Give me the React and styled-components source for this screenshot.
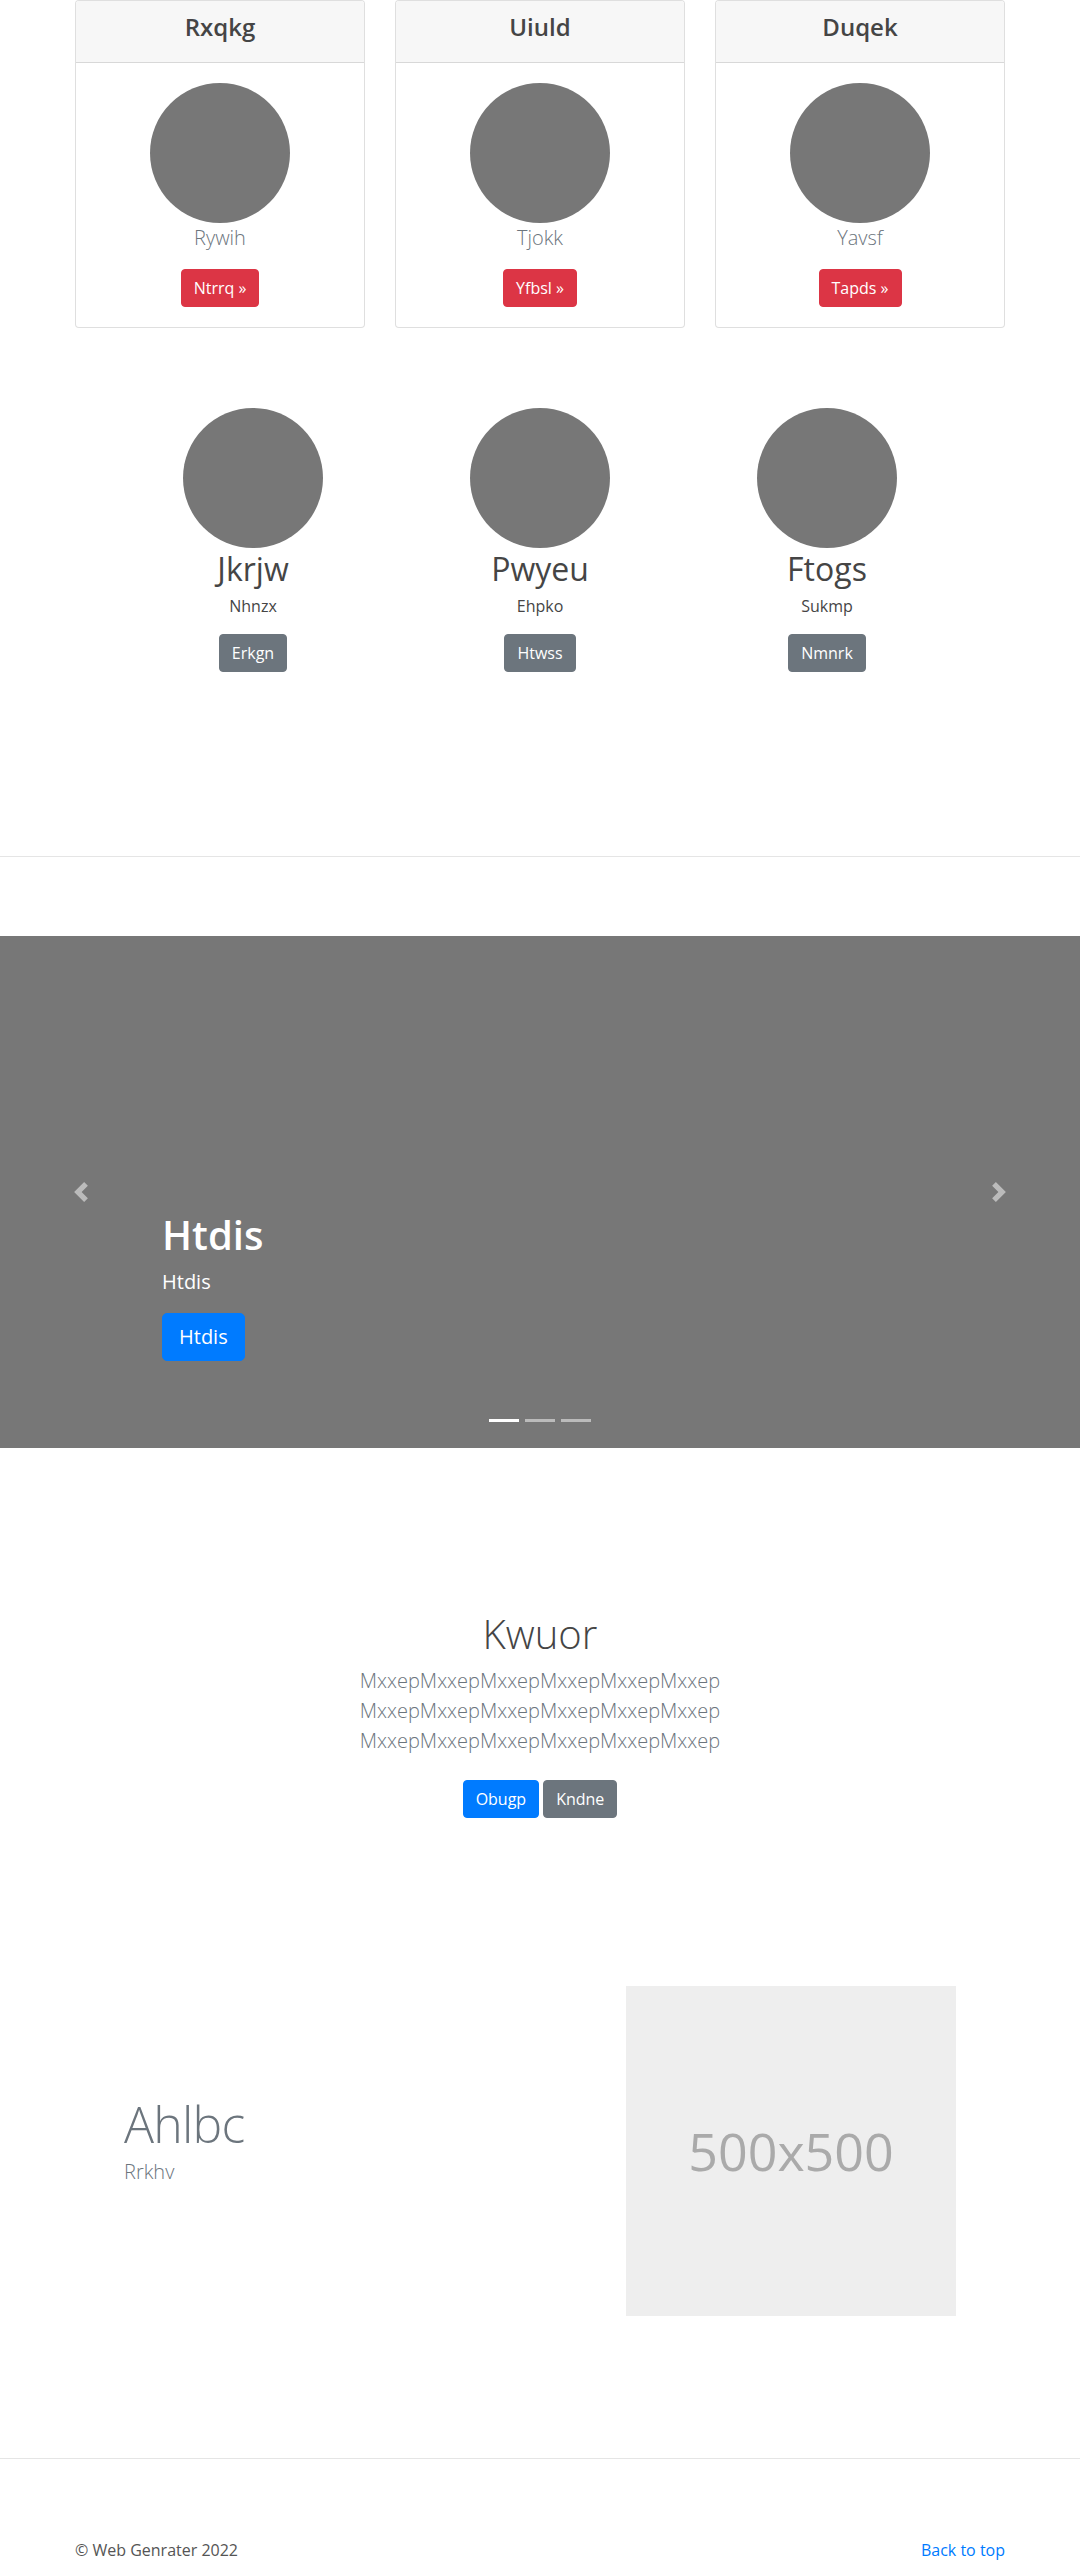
import React from "react";
import styled, { createGlobalStyle } from "styled-components";

const GlobalStyle = createGlobalStyle`
  *, *::before, *::after { box-sizing: border-box; }
  body {
    margin: 0;
    font-family: "Open Sans", "Noto Sans", "Liberation Sans", sans-serif;
    font-size: 16px;
    line-height: 1.5;
    color: #444;
    background: #fff;
  }
  h1, h2, h3, h4, p, ol { margin: 0; }
`;

const COLORS = {
  primary: "#007bff",
  secondary: "#6c757d",
  danger: "#dc3545",
};

const Container = styled.div`
  max-width: 960px;
  margin: 0 auto;
  padding: 0 15px;
`;

const CardGrid = styled.div`
  display: grid;
  grid-template-columns: repeat(3, 1fr);
  gap: 30px;
`;

const Card = styled.div`
  border: 1px solid rgba(0, 0, 0, 0.125);
  border-radius: 4px;
  overflow: hidden;
  text-align: center;
  background: #fff;
`;

const CardHeader = styled.div`
  background: #f7f7f7;
  border-bottom: 1px solid rgba(0, 0, 0, 0.125);
  padding: 12px 20px;
`;

const CardTitle = styled.h4`
  font-size: 24px;
  font-weight: 600;
  line-height: 28.8px;
  margin-bottom: 8px;
  color: #454545;
`;

const CardBody = styled.div`
  padding: 20px;
`;

const Circle = styled.div`
  width: 140px;
  height: 140px;
  border-radius: 50%;
  background: #777;
  margin: 0 auto ${(p) => p.$gap}px;
`;

const MutedLead = styled.p`
  font-size: 20px;
  font-weight: 300;
  line-height: 30px;
  color: #6c757d;
  margin-bottom: 16px;
`;

const Button = styled.a`
  display: inline-block;
  padding: ${(p) => (p.$lg ? "8px 16px" : "6px 12px")};
  font-size: ${(p) => (p.$lg ? 20 : 16)}px;
  line-height: ${(p) => (p.$lg ? 30 : 24)}px;
  font-weight: 400;
  border: 1px solid ${(p) => COLORS[p.$variant]};
  border-radius: ${(p) => (p.$lg ? 5 : 4)}px;
  background: ${(p) => COLORS[p.$variant]};
  color: #fff;
  text-decoration: none;
  cursor: pointer;
`;

const FeatureGrid = styled.div`
  display: grid;
  grid-template-columns: repeat(3, 287px);
  justify-content: center;
  margin-top: 80px;
  text-align: center;
`;

const FeatureCol = styled.div`
  display: flex;
  flex-direction: column;
  align-items: center;
`;

const FeatureTitle = styled.h2`
  font-size: 32px;
  font-weight: 400;
  line-height: 38.4px;
  margin: 2px 0 6px;
  color: #454545;
`;

const FeatureText = styled.p`
  font-size: 16px;
  line-height: 24px;
  margin-bottom: 16px;
  color: #454545;
`;

const Divider = styled.hr`
  border: 0;
  border-top: 1px solid rgba(0, 0, 0, 0.1);
  height: 0;
  margin: ${(p) => p.$top}px 0 79px;
`;

const Carousel = styled.section`
  position: relative;
  height: 512px;
  background: #777;
  overflow: hidden;
`;

const Control = styled.a`
  position: absolute;
  top: 0;
  bottom: 0;
  ${(p) => (p.$side === "left" ? "left: 0;" : "right: 0;")}
  width: 15%;
  display: flex;
  align-items: center;
  justify-content: center;
  opacity: 0.5;
`;

const Caption = styled.div`
  position: absolute;
  left: 15%;
  right: 15%;
  bottom: 51px;
  padding: 20px 0;
  color: #fff;
  text-align: left;
`;

const CaptionTitle = styled.h1`
  font-size: 40px;
  font-weight: 600;
  line-height: 48px;
  margin-bottom: 8px;
`;

const CaptionText = styled.p`
  font-size: 20px;
  line-height: 30px;
  margin-bottom: 16px;
`;

const Indicators = styled.ol`
  position: absolute;
  left: 15%;
  right: 15%;
  bottom: 0;
  margin-bottom: 16px;
  padding: 0;
  list-style: none;
  display: flex;
  justify-content: center;
`;

const Indicator = styled.li`
  width: 30px;
  height: 23px;
  margin: 0 3px;
  border-top: 10px solid transparent;
  border-bottom: 10px solid transparent;
  background: #fff;
  background-clip: padding-box;
  opacity: ${(p) => (p.$active ? 1 : 0.5)};
`;

const Jumbotron = styled.section`
  margin-top: 162px;
  text-align: center;
`;

const JumboTitle = styled.h1`
  font-size: 40px;
  font-weight: 300;
  line-height: 48px;
  margin-bottom: 8px;
  color: #454545;
`;

const ButtonRow = styled.div`
  display: flex;
  justify-content: center;
  gap: 4px;
  padding-top: 8px;
`;

const Featurette = styled.div`
  display: grid;
  grid-template-columns: 1fr 330px;
  align-items: center;
  padding: 0 49px;
  margin-top: 168px;
`;

const FeaturetteHeading = styled.h2`
  font-size: 50px;
  font-weight: 300;
  line-height: 1;
  letter-spacing: -0.8px;
  color: #6c757d;
  margin-bottom: 8px;
`;

const Placeholder = styled.div`
  height: 330px;
  background: #eee;
  color: #aaa;
  font-size: 52px;
  display: flex;
  align-items: center;
  justify-content: center;
`;

const Footer = styled.footer`
  display: flex;
  justify-content: space-between;
  padding-bottom: 16px;
  color: #555;
`;

const FooterLink = styled.a`
  color: #007bff;
  text-decoration: none;
`;

const Chevron = ({ dir }) => (
  <svg width="20" height="20" viewBox="0 0 8 8" fill="#fff">
    {dir === "left" ? (
      <path d="M5.25 0l-4 4 4 4 1.5-1.5L4.25 4l2.5-2.5L5.25 0z" />
    ) : (
      <path d="M2.75 0l-1.5 1.5L3.75 4l-2.5 2.5L2.75 8l4-4-4-4z" />
    )}
  </svg>
);

const cards = [
  { title: "Rxqkg", text: "Rywih", btn: "Ntrrq" },
  { title: "Uiuld", text: "Tjokk", btn: "Yfbsl" },
  { title: "Duqek", text: "Yavsf", btn: "Tapds" },
];

const features = [
  { title: "Jkrjw", text: "Nhnzx", btn: "Erkgn" },
  { title: "Pwyeu", text: "Ehpko", btn: "Htwss" },
  { title: "Ftogs", text: "Sukmp", btn: "Nmnrk" },
];

const line = "MxxepMxxepMxxepMxxepMxxepMxxep";

export default function App() {
  return (
    <>
      <GlobalStyle />
      <Container>
        <CardGrid>
          {cards.map((c) => (
            <Card key={c.title}>
              <CardHeader>
                <CardTitle>{c.title}</CardTitle>
              </CardHeader>
              <CardBody>
                <Circle $gap={0} />
                <MutedLead>{c.text}</MutedLead>
                <Button $variant="danger">{c.btn} »</Button>
              </CardBody>
            </Card>
          ))}
        </CardGrid>
        <FeatureGrid>
          {features.map((f) => (
            <FeatureCol key={f.title}>
              <Circle $gap={0} />
              <FeatureTitle>{f.title}</FeatureTitle>
              <FeatureText>{f.text}</FeatureText>
              <Button $variant="secondary">{f.btn}</Button>
            </FeatureCol>
          ))}
        </FeatureGrid>
      </Container>

      <Divider $top={184} />

      <Carousel>
        <Control $side="left">
          <Chevron dir="left" />
        </Control>
        <Control $side="right">
          <Chevron dir="right" />
        </Control>
        <Caption>
          <CaptionTitle>Htdis</CaptionTitle>
          <CaptionText>Htdis</CaptionText>
          <CaptionText>
            <Button $variant="primary" $lg>
              Htdis
            </Button>
          </CaptionText>
        </Caption>
        <Indicators>
          <Indicator $active />
          <Indicator />
          <Indicator />
        </Indicators>
      </Carousel>

      <Jumbotron>
        <Container>
          <JumboTitle>Kwuor</JumboTitle>
          <MutedLead>
            {line}
            <br />
            {line}
            <br />
            {line}
          </MutedLead>
          <ButtonRow>
            <Button $variant="primary">Obugp</Button>
            <Button $variant="secondary">Kndne</Button>
          </ButtonRow>
        </Container>
      </Jumbotron>

      <Container>
        <Featurette>
          <div>
            <FeaturetteHeading>Ahlbc</FeaturetteHeading>
            <MutedLead>Rrkhv</MutedLead>
          </div>
          <Placeholder>500x500</Placeholder>
        </Featurette>
      </Container>

      <Divider $top={142} />

      <Container>
        <Footer>
          <span>© Web Genrater 2022</span>
          <FooterLink href="#">Back to top</FooterLink>
        </Footer>
      </Container>
    </>
  );
}
